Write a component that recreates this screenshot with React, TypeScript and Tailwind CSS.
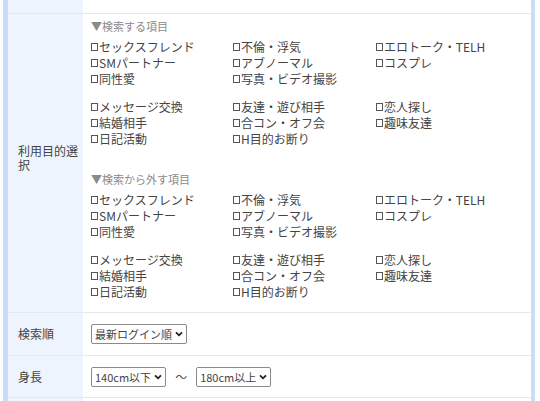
const groupA = [
  ['セックスフレンド', '不倫・浮気', 'エロトーク・TELH'],
  ['SMパートナー', 'アブノーマル', 'コスプレ'],
  ['同性愛', '写真・ビデオ撮影', ''],
]

const groupB = [
  ['メッセージ交換', '友達・遊び相手', '恋人探し'],
  ['結婚相手', '合コン・オフ会', '趣味友達'],
  ['日記活動', 'H目的お断り', ''],
]

function Box() {
  return <span className="inline-block w-[7px] h-[8px] border border-[#555] mr-[1px] shrink-0" />
}

function CheckGrid({ rows }: { rows: string[][] }) {
  return (
    <div className="flex flex-col">
      {rows.map((row, i) => (
        <div key={i} className="grid grid-cols-[142px_143px_142px] h-[16px]">
          {row.map((label, j) =>
            label ? (
              <label key={j} className="flex items-center">
                <Box />
                <span>{label}</span>
              </label>
            ) : (
              <span key={j} />
            )
          )}
        </div>
      ))}
    </div>
  )
}

function Chevron() {
  return (
    <svg className="w-[8px] h-[6px] ml-[3px]" viewBox="0 0 8 6" fill="none" stroke="#222" strokeWidth={1.8}>
      <path d="M1 1.3l3 3 3-3" />
    </svg>
  )
}

function FakeSelect({ value }: { value: string }) {
  return (
    <div className="inline-flex items-center h-[20px] px-[3px] border border-[#8a8a8a] rounded-[2px] bg-white text-[11px]">
      <span>{value}</span>
      <Chevron />
    </div>
  )
}

function Section({ title, rows }: { title: string; rows: string[][][] }) {
  return (
    <div className="flex flex-col">
      <div className="h-[16px] leading-[16px] text-[11px] text-[#8a8a8a]">▼{title}</div>
      <div className="mt-[5px] flex flex-col gap-[12px]">
        {rows.map((r, i) => (
          <CheckGrid key={i} rows={r} />
        ))}
      </div>
    </div>
  )
}

export default function App() {
  return (
    <div
      className="w-[540px] h-[401px] overflow-hidden bg-white text-[12px] leading-[16px] text-[#444]"
      style={{ fontFamily: '"Noto Sans CJK JP", "Noto Sans", sans-serif' }}
    >
      <div className="ml-[3px] w-[532px] border-l-[5px] border-r-[4px] border-[#c9def6]">
        {/* 前の行の終わり */}
        <div className="grid grid-cols-[75px_1fr] h-[14px] border-b border-[#e4e9ef]">
          <div className="bg-[#edf4fd]" />
          <div />
        </div>

        {/* 利用目的選択 */}
        <div className="grid grid-cols-[75px_1fr] border-b border-[#e4e9ef]">
          <div className="bg-[#edf4fd] flex items-center pl-[10px] pr-[4px] pb-[10px] leading-[14px]">
            <span>利用目的選択</span>
          </div>
          <div className="pl-[8px] pt-[4px] pb-[12px] flex flex-col gap-[24px]">
            <Section title="検索する項目" rows={[groupA, groupB]} />
            <Section title="検索から外す項目" rows={[groupA, groupB]} />
          </div>
        </div>

        {/* 検索順 */}
        <div className="grid grid-cols-[75px_1fr] h-[43px] border-b border-[#e4e9ef]">
          <div className="bg-[#edf4fd] flex items-center pl-[10px]">検索順</div>
          <div className="flex items-center pl-[8px]">
            <FakeSelect value="最新ログイン順" />
          </div>
        </div>

        {/* 身長 */}
        <div className="grid grid-cols-[75px_1fr] h-[42px] border-b border-[#e4e9ef]">
          <div className="bg-[#edf4fd] flex items-center pl-[10px]">身長</div>
          <div className="flex items-center pl-[8px]">
            <FakeSelect value="140cm以下" />
            <span className="mx-[9px] text-[#555]">～</span>
            <FakeSelect value="180cm以上" />
          </div>
        </div>

        <div className="grid grid-cols-[75px_1fr] h-[20px]">
          <div className="bg-[#edf4fd]" />
          <div />
        </div>
      </div>
    </div>
  )
}
